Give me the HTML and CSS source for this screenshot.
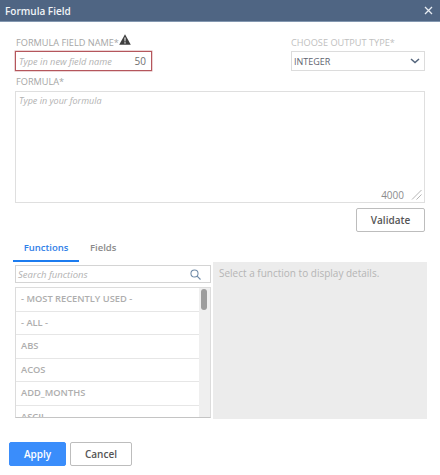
FILE: index.html
```html
<!DOCTYPE html>
<html lang="en">
<head>
<meta charset="utf-8">
<title>Formula Field</title>
<link rel="stylesheet" href="styles.css">
</head>
<body>
<div class="dialog">
  <header class="titlebar">
    <span class="title">Formula Field</span>
    <svg class="close" width="9" height="9" viewBox="0 0 9 9"><path d="M1 1l7 7M8 1L1 8" stroke="#e8edf3" stroke-width="1.3" fill="none"/></svg>
  </header>
  <main class="content">
    <div class="top-row">
      <div class="name-col">
        <div class="label label-name">FORMULA FIELD NAME*
          <svg class="warn" width="12" height="11" viewBox="0 0 12 11"><path d="M6 0.3L11.8 10.7H0.2z" fill="#3f3f3f"/><path d="M5.4 3.6h1.2l-.2 4H5.6zM5.4 8.3h1.2v1.2H5.4z" fill="#fff"/></svg>
        </div>
        <div class="name-input"><span class="ph ph-name">Type in new field name</span><span class="count">50</span></div>
      </div>
      <div class="type-col">
        <div class="label label-type">CHOOSE OUTPUT TYPE*</div>
        <div class="select"><span>INTEGER</span>
          <svg width="10" height="6" viewBox="0 0 10 6"><path d="M1 1l4 3.6L9 1" stroke="#54657c" stroke-width="1.5" fill="none"/></svg>
        </div>
      </div>
    </div>
    <div class="label label-formula">FORMULA*</div>
    <div class="formula">
      <span class="ph">Type in your formula</span>
      <div class="formula-foot"><span class="count-big">4000</span>
        <svg width="11" height="11" viewBox="0 0 11 11"><path d="M1 10.5L10.5 1M5.5 10.5l5-5" stroke="#b5b5b5" stroke-width="1" fill="none"/></svg>
      </div>
    </div>
    <div class="validate-row"><button class="btn validate">Validate</button></div>
    <nav class="tabs">
      <div class="tab active">Functions</div>
      <div class="tab">Fields</div>
    </nav>
    <div class="split">
      <div class="left">
        <div class="search"><span class="ph ph-search">Search functions</span>
          <svg width="11" height="11" viewBox="0 0 13 13"><circle cx="5.3" cy="5.3" r="4.2" stroke="#6d89a6" stroke-width="1.2" fill="none"/><path d="M8.4 8.4l4 4" stroke="#6d89a6" stroke-width="1.3"/></svg>
        </div>
        <div class="list">
          <div class="rows">
            <div class="row">- MOST RECENTLY USED -</div>
            <div class="row">- ALL -</div>
            <div class="row">ABS</div>
            <div class="row">ACOS</div>
            <div class="row">ADD_MONTHS</div>
            <div class="row">ASCII</div>
          </div>
          <div class="scroll"><div class="thumb"></div></div>
        </div>
      </div>
      <div class="details">Select a function to display details.</div>
    </div>
  </main>
  <footer class="actions">
    <button class="btn apply">Apply</button>
    <button class="btn cancel">Cancel</button>
  </footer>
</div>
</body>
</html>
```
FILE: styles.css
```css
* { box-sizing: border-box; }
html, body { margin: 0; padding: 0; }
body { width: 440px; height: 475px; background: #fff; font-family: "Open Sans", "Liberation Sans", sans-serif; overflow: hidden; }
.dialog { display: flex; flex-direction: column; height: 475px; }
.titlebar { height: 22px; background: #4f6583; border-bottom: 1px solid #8397b0; display: flex; align-items: center; justify-content: space-between; padding: 0 7px 0 5px; }
.title { color: #f1f4f7; font-size: 10px; font-weight: 600; }
.content { padding: 12px 15px 0; flex: 1; }
.top-row { display: flex; justify-content: space-between; }
.name-col { width: 137px; }
.type-col { width: 134px; }
.label { font-size: 9.2px; line-height: 13px; color: #b4b4b4; white-space: nowrap; }
.label-name { color: #a6a6a6; display: flex; align-items: center; height: 17px; padding-left: 1px; }
.warn { margin-top: -6px; }
.label-type { color: #c0c0c0; height: 17px; display: flex; align-items: center; }
.label-formula { color: #a6a6a6; margin-top: 5px; height: 11px; line-height: 11px; padding-left: 1px; }
.ph { font-style: italic; font-size: 9px; color: #b2b2b2; }
.ph-name { font-size: 9.2px; }
.ph-search { font-size: 9.5px; }
.name-input { height: 20px; border: 1px solid #b5565c; display: flex; align-items: center; justify-content: space-between; padding: 0 5px 0 3px; box-shadow: 0 0 0 .5px #d9a9ab; }
.count { font-size: 10px; color: #6f6f6f; }
.select { height: 20px; border: 1px solid #dcdcdc; display: flex; align-items: center; justify-content: space-between; padding: 0 4px 0 2px; font-size: 9px; color: #5f6470; }
.formula { margin-top: 4px; width: 410px; height: 112px; border: 1px solid #dfdfdf; padding: 0 2px 0 3px; display: flex; flex-direction: column; justify-content: space-between; }
.formula .ph { line-height: 17px; }
.formula-foot { display: flex; justify-content: flex-end; align-items: center; gap: 7px; height: 14px; padding-bottom: 1px; }
.count-big { font-size: 10px; color: #8c8c8c; }
.validate-row { display: flex; justify-content: flex-end; margin-top: 5px; width: 410px; }
.btn { font-family: inherit; font-weight: 600; font-size: 10px; border-radius: 2px; cursor: pointer; padding: 0; }
.validate { width: 69px; height: 24px; background: #fff; border: 1px solid #bdbdbd; color: #555; }
.tabs { display: flex; margin-left: -2px; height: 30px; }
.tab { font-size: 9.5px; font-weight: 600; color: #8b8b8b; line-height: 32px; }
.tab.active { color: #2f80e8; width: 66px; text-align: center; border-bottom: 2px solid #1c7cf0; margin-right: 11px; }
.split { display: flex; gap: 2px; width: 412px; }
.left { width: 196px; flex: none; padding-top: 3px; }
.search { height: 18px; border: 1px solid #d4d4d4; display: flex; justify-content: space-between; align-items: center; padding: 0 9px 0 2px; }
.list { margin-top: 4px; height: 131px; border: 1px solid #dcdcdc; border-bottom-color: #c4c4c4; overflow: hidden; display: flex; }
.rows { flex: 1; }
.row { height: 23.5px; line-height: 22px; border-bottom: 1px solid #e6e6e6; font-size: 9.3px; font-weight: 600; color: #aeaeae; padding-left: 5px; white-space: nowrap; }
.scroll { width: 11px; background: #efefef; padding: 1px 2px; }
.thumb { width: 6px; height: 21px; background: #9d9d9d; border-radius: 3px; }
.details { flex: 1; height: 157px; background: #ececec; font-size: 10px; color: #b5b5b5; padding: 4px 6px; white-space: nowrap; }
.actions { display: flex; gap: 4px; padding: 0 0 9px 9px; }
.apply { width: 57px; height: 24px; background: #3a8dfb; border: 1px solid #3a8dfb; color: #fff; }
.cancel { width: 62px; height: 24px; background: #fff; border: 1px solid #bdbdbd; color: #555; }
```
